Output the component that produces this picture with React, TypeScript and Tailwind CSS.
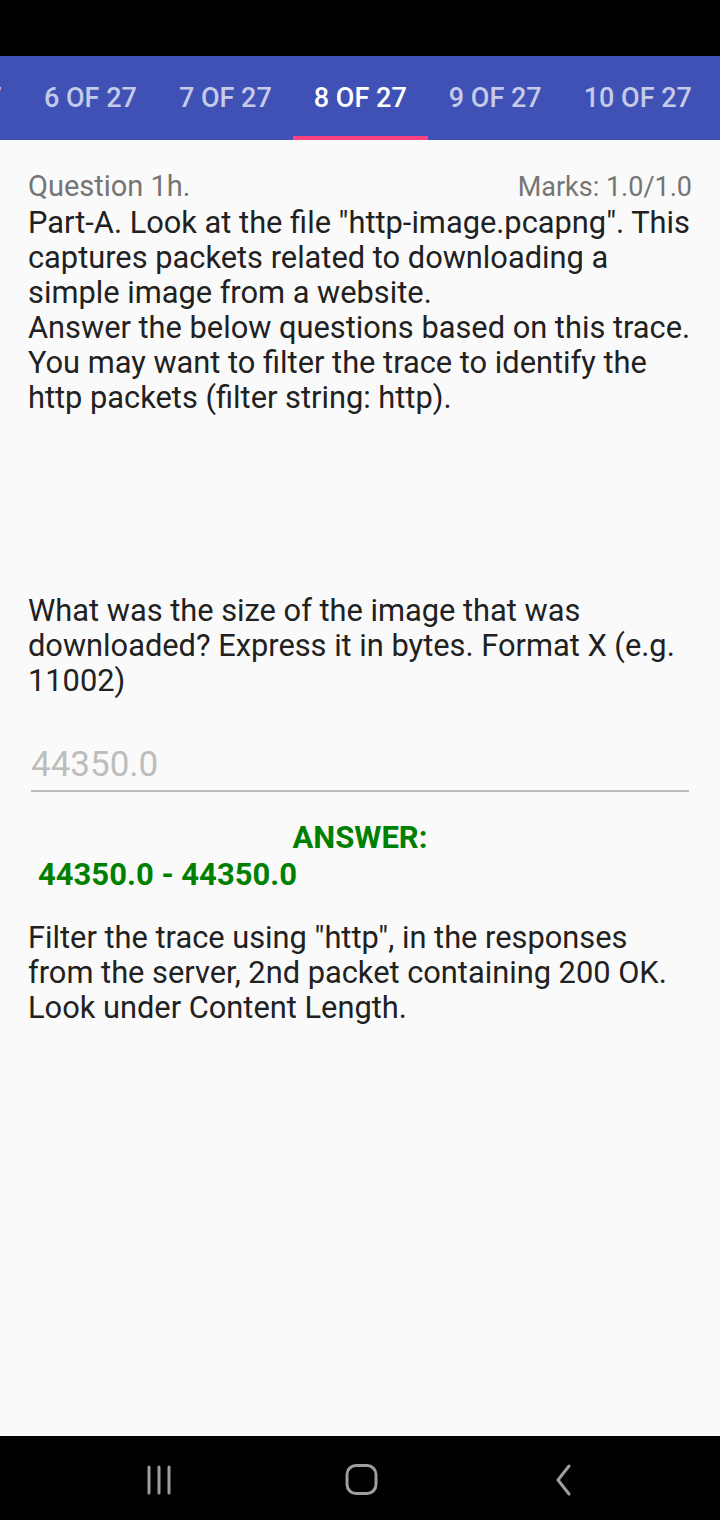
import React from "react";

const tabs = ["5 OF 27", "6 OF 27", "7 OF 27", "8 OF 27", "9 OF 27", "10 OF 27"];

const Lines: React.FC<{ lines: string[]; className?: string }> = ({ lines, className }) => (
  <div className={className}>
    {lines.map((l) => (
      <div key={l} className="whitespace-nowrap">
        {l}
      </div>
    ))}
  </div>
);

const NavBar: React.FC = () => (
  <div className="flex h-[84px] items-center bg-black pl-[59px] pt-[4px]">
    <div className="flex w-[202px] justify-center">
      <svg width="30" height="30" viewBox="0 0 30 30">
        <g stroke="#9e9e9e" strokeWidth="3" strokeLinecap="round">
          <line x1="4" y1="2" x2="4" y2="28" />
          <line x1="14" y1="2" x2="14" y2="28" />
          <line x1="24" y1="2" x2="24" y2="28" />
        </g>
      </svg>
    </div>
    <div className="flex w-[202px] justify-center">
      <svg width="34" height="34" viewBox="0 0 34 34">
        <rect x="2" y="2.5" width="29" height="28" rx="9" fill="none" stroke="#9e9e9e" strokeWidth="3" />
      </svg>
    </div>
    <div className="flex w-[202px] justify-center">
      <svg width="22" height="32" viewBox="0 0 22 32">
        <polyline points="16,2 5,16 16,30" fill="none" stroke="#9e9e9e" strokeWidth="3" strokeLinecap="round" strokeLinejoin="round" />
      </svg>
    </div>
  </div>
);

export default function App() {
  return (
    <div className="flex h-[1520px] w-[720px] flex-col overflow-hidden bg-[#fafafa] font-['Roboto',sans-serif]">
      <div className="h-[56px] bg-black" />
      <div className="h-[84px] overflow-hidden bg-[#3f51b5]">
        <div className="ml-[-112px] flex h-full">
          {tabs.map((t) => {
            const active = t === "8 OF 27";
            return (
              <div
                key={t}
                className={
                  "flex h-full shrink-0 flex-col items-center justify-center border-b-4 px-[21px] pt-1 text-[27px] font-medium " +
                  (active ? "border-[#ff4081] text-white" : "border-transparent text-[#c5cae9]")
                }
              >
                {t}
              </div>
            );
          })}
        </div>
      </div>

      <div className="flex-1 px-[28px] pt-[29px] text-[30.8px] leading-[35px] text-[#212121]">
        <div className="flex items-baseline justify-between text-[#757575]">
          <span className="text-[29px]">Question 1h.</span>
          <span className="text-[27px]">Marks: 1.0/1.0</span>
        </div>
        <Lines
          lines={[
            'Part-A. Look at the file "http-image.pcapng". This',
            "captures packets related to downloading a",
            "simple image from a website.",
            "Answer the below questions based on this trace.",
            "You may want to filter the trace to identify the",
            "http packets (filter string: http).",
          ]}
        />

        <Lines
          className="mt-[178px]"
          lines={[
            "What was the size of the image that was",
            "downloaded? Express it in bytes. Format X (e.g.",
            "11002)",
          ]}
        />

        <div className="mx-[3px] mt-[49px] border-b-2 border-[#bdbdbd] pb-[8px] text-[35px] text-[#bdbdbd]">
          44350.0
        </div>

        <div className="mt-[28px] text-center text-[31px] font-bold text-[#008000]">ANSWER:</div>
        <div className="mt-[2px] pl-[10px] text-[31px] font-bold text-[#008000]">44350.0 - 44350.0</div>

        <Lines
          className="mt-[28px]"
          lines={[
            'Filter the trace using "http", in the responses',
            "from the server, 2nd packet containing 200 OK.",
            "Look under Content Length.",
          ]}
        />
      </div>

      <NavBar />
    </div>
  );
}
